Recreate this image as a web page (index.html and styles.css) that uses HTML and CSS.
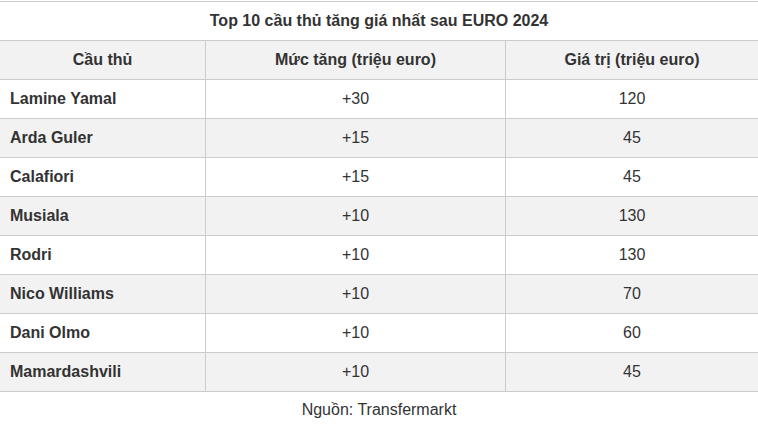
FILE: index.html
```html
<!DOCTYPE html>
<html lang="vi">
<head>
<meta charset="utf-8">
<link rel="stylesheet" href="styles.css">
</head>
<body>
<table class="stats">
  <thead>
    <tr><th class="title" colspan="3">Top 10 cầu thủ tăng giá nhất sau EURO 2024</th></tr>
    <tr class="head"><th class="c1">Cầu thủ</th><th class="c2">Mức tăng (triệu euro)</th><th class="c3">Giá trị (triệu euro)</th></tr>
  </thead>
  <tbody>
    <tr><td class="name">Lamine Yamal</td><td>+30</td><td>120</td></tr>
    <tr class="alt"><td class="name">Arda Guler</td><td>+15</td><td>45</td></tr>
    <tr><td class="name">Calafiori</td><td>+15</td><td>45</td></tr>
    <tr class="alt"><td class="name">Musiala</td><td>+10</td><td>130</td></tr>
    <tr><td class="name">Rodri</td><td>+10</td><td>130</td></tr>
    <tr class="alt"><td class="name">Nico Williams</td><td>+10</td><td>70</td></tr>
    <tr><td class="name">Dani Olmo</td><td>+10</td><td>60</td></tr>
    <tr class="alt"><td class="name">Mamardashvili</td><td>+10</td><td>45</td></tr>
  </tbody>
</table>
<p class="source">Nguồn: Transfermarkt</p>
</body>
</html>
```
FILE: styles.css
```css
html, body {
  margin: 0;
  padding: 0;
  background: #ffffff;
}
body {
  font-family: "Liberation Sans", Arial, sans-serif;
  color: #333333;
  font-size: 16px;
}
.stats {
  width: 758px;
  border-collapse: collapse;
  margin-top: 1px;
}
.stats th, .stats td {
  border: 1px solid #cccccc;
  padding: 0 10px;
  height: 38px;
  line-height: 18px;
  text-align: center;
}
.stats th {
  font-weight: bold;
}
.stats .title {
  background: #ffffff;
  border-left: none;
  border-right: none;
}
.head th {
  background: #f2f2f2;
}
.stats tr > :first-child { border-left: none; }
.stats tr > :last-child { border-right: none; }
.c1 { width: 185px; }
.c2 { width: 279px; }
.stats td.name {
  text-align: left;
  font-weight: bold;
}
.alt td {
  background: #f2f2f2;
}
.source {
  margin: 9px 0 0;
  text-align: center;
  line-height: 18px;
}
```
